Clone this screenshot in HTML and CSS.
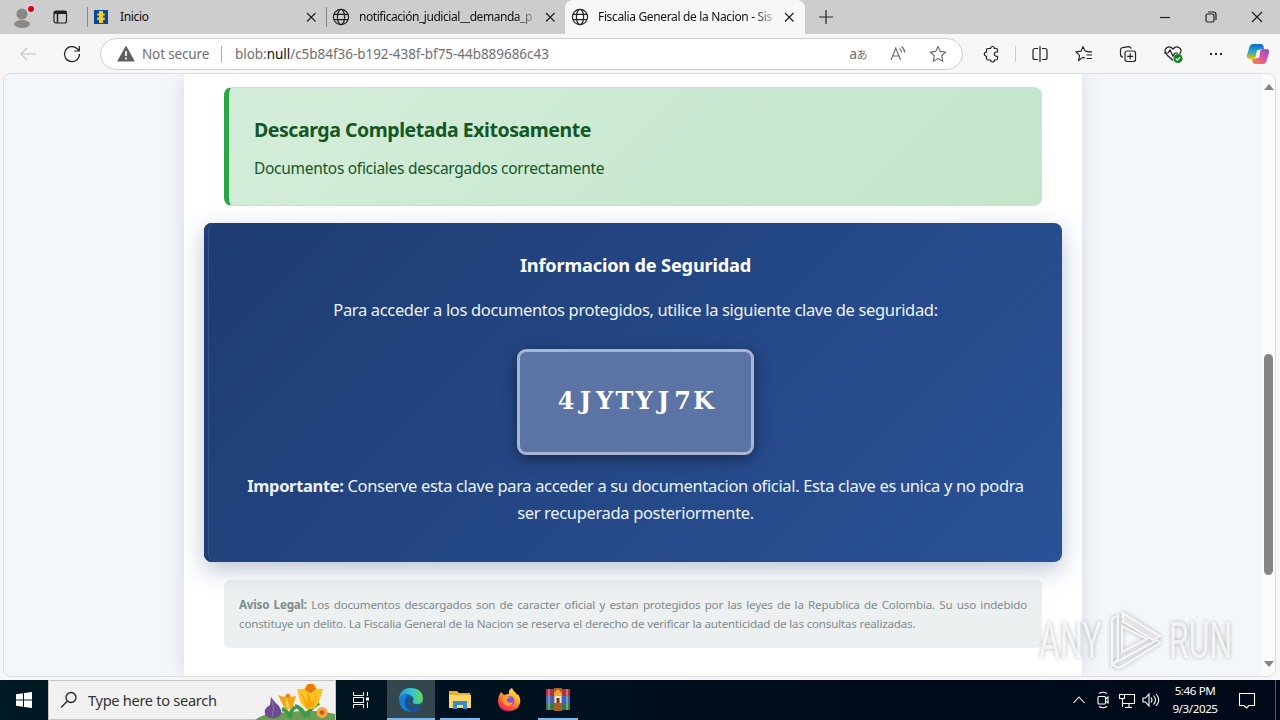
FILE: index.html
```html
<!DOCTYPE html>
<html lang="es">
<head>
  <meta charset="UTF-8">
  <title>Fiscalia General de la Nacion - Sis</title>
  <link rel="stylesheet" href="styles.css">
</head>
<body>

  <svg width="0" height="0" class="defs">
    <symbol id="x" viewBox="0 0 16 16"><path d="M4 4l8.500 8.500M12.500 4L4 12.500"/></symbol>
    <symbol id="globe" viewBox="0 0 18 18"><circle cx="9" cy="9" r="7.6"/><ellipse cx="9" cy="9" rx="3.6" ry="7.6"/><path d="M2 6.3h14M2 11.7h14"/></symbol>
  </svg>

  <div class="tabs">
    <svg class="avatar" width="34" height="34" viewBox="0 0 34 34"><circle cx="17" cy="14" r="5.5" fill="#8c8885"/><ellipse cx="17" cy="24" rx="8" ry="4" fill="#8c8885"/><circle cx="26" cy="9" r="4" fill="#d8e0e0"/><circle cx="26" cy="9" r="3" fill="#d9001b"/></svg>
    <svg class="workspace" width="16" height="16" viewBox="0 0 16 16"><rect x="2" y="2" width="12.5" height="12" rx="2"/><path d="M2 3.500h12.500" stroke-width="3"/><path d="M5.500 4v10" stroke-width="1.500"/></svg>
    <div class="tab tab1">
      <svg class="fav" width="14" height="14" viewBox="0 0 14 14"><path d="M0 0h14v14H0z" fill="#0a4895"/><path d="M5 1h4v2.500h1.800v2H9v2h1.800v2.500H9V13H5v-3H3.200V7.500H5v-2H3.200v-2H5z" fill="#f5cf20"/></svg>
      <span class="tab-title">Inicio</span>
      <svg class="close" width="16" height="16"><use href="#x"/></svg>
    </div>
    <div class="tab tab2">
      <svg width="18" height="18"><use href="#globe"/></svg>
      <span class="tab-title fade">notificación_judicial__demanda_p</span>
      <svg class="close" width="16" height="16"><use href="#x"/></svg>
    </div>
    <div class="tab tab3">
      <svg width="18" height="18"><use href="#globe"/></svg>
      <span class="tab-title fade">Fiscalia General de la Nacion - Sis</span>
      <svg class="close" width="16" height="16"><use href="#x"/></svg>
    </div>
    <svg class="plus" width="16" height="16" viewBox="0 0 16 16"><path d="M8 1v14M1 8h14"/></svg>
    <div class="window-buttons">
      <svg width="46" height="34" viewBox="0 0 46 34"><path d="M18 17.500h10"/></svg>
      <svg width="46" height="34" viewBox="0 0 46 34"><rect x="18" y="14" width="8" height="8" rx="1.500"/><path d="M20 12h5.500a2.500 2.500 0 0 1 2.500 2.500V20"/></svg>
      <svg width="46" height="34" viewBox="0 0 46 34"><path d="M18 12l10 10M28 12L18 22"/></svg>
    </div>
  </div>

  <div class="toolbar">
    <svg class="back" width="18" height="18" viewBox="0 0 18 18"><path d="M17 9H2M8 3L2 9l6 6"/></svg>
    <svg class="reload" width="20" height="20" viewBox="0 0 20 20"><path d="M17.500 10A7.500 7.500 0 1 1 15 4.500l2 2M17.300 2v5h-5"/></svg>
    <div class="address">
      <svg class="warn" width="18" height="18" viewBox="0 0 18 18"><path d="M9 1.500L17 16H1z" fill="#5f5f5f" stroke="#5f5f5f" stroke-linejoin="round"/><path d="M9 6v5M9 12.500v2" stroke="#fff" stroke-width="1.700"/></svg>
      <span class="secure">Not secure</span>
      <span class="url">blob:<b>null</b>/c5b84f36-b192-438f-bf75-44b889686c43</span>
      <span class="translate">a<small>あ</small></span>
      <svg class="read" width="18" height="18" viewBox="0 0 18 18"><path d="M2 15L6.800 3 11.500 15M3.600 11h6.300M10.500 3.500q2 1.500 2 4M12.500 1.500q3 2 3.200 6"/></svg>
      <svg class="star" width="18" height="18" viewBox="0 0 18 18"><path d="M9 1.500l2.300 4.900 5.300.7-3.900 3.700 1 5.400L9 13.600l-4.700 2.600 1-5.400L1.400 7.100l5.300-.7z"/></svg>
    </div>
    <div class="tools">
      <svg class="puzzle" width="18" height="18" viewBox="0 0 18 18"><path d="M5 3.500h2.500a2 2 0 0 1 4 0H13q1.500 0 1.500 1.500v2h-1a2 2 0 0 0 0 4.300h1v2.200q0 1.500-1.500 1.500h-1.500a2 2 0 0 1-4 0H5q-1.500 0-1.500-1.500v-2.200a2.100 2.100 0 0 1 0-4.300V5Q3.500 3.500 5 3.500z"/></svg>
      <i class="line"></i>
      <svg width="18" height="18" viewBox="0 0 18 18"><path d="M7 3.500H4a2 2 0 0 0-2 2v7a2 2 0 0 0 2 2h3M11 3.500h3a2 2 0 0 1 2 2v7a2 2 0 0 1-2 2h-3M9 1v16"/></svg>
      <svg width="18" height="18" viewBox="0 0 18 18"><path d="M10 12.800L8 12.300l-4.300 3.200.8-5.100L1 7l5-.8L8 1.800l2.300 4.400L16 7M11.500 10H17M11.500 13.500H17M12 6.800H17"/></svg>
      <svg width="18" height="18" viewBox="0 0 18 18"><path d="M4 12Q1.500 12 1.500 9V5q0-2 2-2.300l6-1q2.300 0 2.500 2"/><rect x="6" y="6" width="10.500" height="10.500" rx="2"/><path d="M11.200 8.300v6M8.200 11.300h6"/></svg>
      <svg width="20" height="20" viewBox="0 0 20 20"><path d="M10 16.500L4 11Q0 6 4 3.500q3-1.800 6 1.500 3-3.300 6-1.500Q20 6 16.500 10M1 9h4l2-3 3 6 2-3h3"/><circle cx="15" cy="14.500" r="4.500" fill="#13851f" stroke="none"/><path d="M12.800 14.500l1.500 1.600 3-3" stroke="#fff"/></svg>
      <svg class="more" width="18" height="18" viewBox="0 0 18 18"><path d="M3 9h2M8 9h2M13 9h2" stroke-width="2"/></svg>
      <svg class="copilot" width="24" height="24" viewBox="0 0 24 24">
        <defs>
          <linearGradient id="cp1" x2="0" y2="1"><stop offset="0" stop-color="#1367d4"/><stop offset=".5" stop-color="#20a9c9"/><stop offset=".8" stop-color="#a3b83c"/><stop offset="1" stop-color="#ffc01f"/></linearGradient>
          <linearGradient id="cp2" x1="1" x2="0" y2="1"><stop offset="0" stop-color="#8656df"/><stop offset=".5" stop-color="#e0539a"/><stop offset="1" stop-color="#ff8a35"/></linearGradient>
        </defs>
        <path d="M7 2h8q2 0 2.500 2l.5 3h-3q-2 0-3 3l-1.500 5q-.5 2-3 2H4q-4 0-3-4l2.500-8Q4.500 2 7 2z" fill="url(#cp1)" stroke="none"/>
        <path d="M17 22H9q-2 0-2.500-2L6 17h3q2 0 3-3l1.500-5q.5-2 3-2H20q4 0 3 4l-2.500 8q-1 3-3.500 3z" fill="url(#cp2)" stroke="none"/>
        <path d="M11 8h3.500L13 16H9.500z" fill="#fff" stroke="none"/>
      </svg>
    </div>
  </div>

  <div class="view">
    <div class="page">
      <div class="container">
        <div class="success">
          <h3>Descarga Completada Exitosamente</h3>
          <p>Documentos oficiales descargados correctamente</p>
        </div>
        <div class="security">
          <h4>Informacion de Seguridad</h4>
          <p class="intro">Para acceder a los documentos protegidos, utilice la siguiente clave de seguridad:</p>
          <div class="key">4<span class="j">J</span>YTY<span class="j">J</span>7K</div>
          <p class="important"><span class="row1"><strong>Importante:</strong> Conserve esta clave para acceder a su documentacion oficial. Esta clave es unica y no podra</span> <span class="row2">ser recuperada posteriormente.</span></p>
        </div>
        <div class="legal"><strong>Aviso Legal:</strong> Los documentos descargados son de caracter oficial y estan protegidos por las leyes de la Republica de Colombia. Su uso indebido constituye un delito. La Fiscalia General de la Nacion se reserva el derecho de verificar la autenticidad de las consultas realizadas.</div>
      </div>
    </div>
    <div class="scrollbar">
      <span class="up"></span>
      <span class="thumb"></span>
      <span class="down"></span>
    </div>
  </div>

  <div class="taskbar">
    <div class="start"><svg width="16" height="16" viewBox="0 0 16 16"><path d="M0 2.200L7 1.200V7.500H0zM8 1l8-1v7.500H8zM0 8.500h7v6.300l-7-1zM8 8.500h8V16l-8-1z" fill="#fff"/></svg></div>
    <div class="search">
      <svg width="18" height="18" viewBox="0 0 18 18"><circle cx="11" cy="6.500" r="5" fill="none" stroke="#222" stroke-width="1.300"/><path d="M7.300 10.200L1 16.500" stroke="#222" stroke-width="1.300"/></svg>
      <span>Type here to search</span>
      <svg class="flowers" width="80" height="39" viewBox="0 0 80 39">
        <path d="M0 39Q14 29 32 32 54 27 80 33v6z" fill="#6d9d54"/>
        <path d="M35 37q-3-8-8-9M35 37q0-7 5-11M51 36q-5-10-11-11M52 36q1-8 12-14" fill="none" stroke="#3d9a47" stroke-width="4"/>
        <g transform="translate(3 1)"><path d="M13 15q4 6 8 9 5 8-1 11-6 3-12-1-4-7 4-11z" fill="#6c4a94"/><path d="M14 18q3 9 0 17" stroke="#9272b0" fill="none"/></g>
        <g transform="translate(-3 -2)"><path d="M26 16l6 2 4-4 3 4 5-1-3 10q-4 6-9 1z" fill="#f5a514"/><path d="M34 17l4 12-4-1z" fill="#ffd04c"/><circle cx="36" cy="17" r="2" fill="#e87910"/></g>
        <path d="M42 8l7 0 2-4 5 1 4-2 2 5 6 0-4 13q-4 8-10 7-7-2-9-8z" fill="#ffc21e"/><path d="M53 3l5 0 3 5-5 4-6-3z" fill="#e87910"/><path d="M46 10l6 12 1-11 4 11 5-11-4 15-7 2z" fill="#f5a514"/>
        <circle cx="67" cy="31.500" r="5.500" fill="#f4a63b"/><circle cx="67" cy="31.500" r="2.300" fill="#c8581f"/>
      </svg>
    </div>
    <div class="app"><svg width="18" height="18" viewBox="0 0 18 18" fill="none" stroke="#fff"><path d="M1.500 1v3.500h10V1M1.500 17v-3.500h10V17M1.500 6.500h10v5h-10zM15.500 1v4M15.500 11v6"/><path d="M14 6.500h3v3h-3z" fill="#fff" stroke="none"/></svg></div>
    <div class="app open">
      <svg width="26" height="26" viewBox="0 0 26 26">
        <defs><linearGradient id="edge"><stop offset="0" stop-color="#2797dd"/><stop offset=".5" stop-color="#30c6cf"/><stop offset="1" stop-color="#68d753"/></linearGradient></defs>
        <circle cx="13" cy="13" r="12" fill="#0d65b8"/>
        <path d="M1 12Q2 1 13 1q11 0 12 10 0 6-6 6-5 0-4-3 2-2-1-5Q7 4 1 12z" fill="url(#edge)"/>
        <path d="M1 12q3-5 9-4-4 3-3 8 1 6 7 8.500Q2 25 1 12z" fill="#187fca"/>
        <path d="M14.500 14q-1 4 5 3.800 3-.2 5-1.500-1 3-3.500 5-9 1-10.500-5-.5-4 3-6 2 2 1 3.700z" fill="#3a4d54"/>
        <path d="M10 14q0 7 7 8 3 .2 5-2-3 4.500-8 4.500Q6 22 7 14q1-4 5-5-2 2-2 5z" fill="#11529b"/>
      </svg>
    </div>
    <div class="app running"><svg width="24" height="24" viewBox="0 0 24 24"><path d="M1 3h8l2 2h11v15H1z" fill="#e9ad33"/><path d="M1 7h22v13H1z" fill="#ffd667"/><path d="M5 13h14v8h-4v-4H9v4H5z" fill="#338dcc"/></svg></div>
    <div class="app"><svg width="24" height="24" viewBox="0 0 24 24">
      <defs><linearGradient id="fox" x1=".8" x2=".2" y2="1"><stop offset="0" stop-color="#fff04b"/><stop offset=".45" stop-color="#ff9a25"/><stop offset=".75" stop-color="#ff473f"/><stop offset="1" stop-color="#ed167a"/></linearGradient></defs>
      <path d="M4 4l3 3q3-1 5-1-1-4 3-6 1 3 4 5l1 2 1-1q3 5 2 9-2 8-11 8Q2 23 1 14q0-6 3-10z" fill="url(#fox)"/><circle cx="12.500" cy="13" r="5" fill="#8052dd"/><path d="M5 10q4-3 9-1-5 1-4 4 1 3 6 1-2 5-6 4-5-2-5-8z" fill="#ff9c28"/>
    </svg></div>
    <div class="app running"><svg width="24" height="24" viewBox="0 0 24 24"><path d="M0 1h24v7H0z" fill="#b42b42"/><path d="M0 8h24v7H0z" fill="#3c65bb"/><path d="M0 15h24v7H0z" fill="#2d7c4b"/><path d="M3 1v21M21 1v21" stroke="#d0bc8d"/><path d="M8 0h8v23H8z" fill="#a85f27"/><path d="M8 5l4-4 4 4v3H8z" fill="#f2a52b"/><path d="M8.500 8h7v7h-7z" fill="#eee6dc"/><path d="M10.500 10h3v5h-3z" fill="#6c3c24"/></svg></div>
    <div class="tray">
      <svg width="24" height="24" viewBox="0 0 24 24"><path d="M6.500 15l5.500-6 5.500 6"/></svg>
      <svg width="24" height="24" viewBox="0 0 24 24"><rect x="7" y="8.500" width="7.500" height="7.500" rx="1"/><path d="M14.500 11l2.500-2v6l-2.500-2M8 5.500q4-2.500 8 0M8 18.500q4 2.500 8 0"/></svg>
      <svg width="24" height="24" viewBox="0 0 24 24"><path d="M8 6.500h11.500v9H7.500V11M14 16v3M10 19.500h7M4.500 6.500h5v4h-5zM7.500 11v8"/></svg>
      <svg width="24" height="24" viewBox="0 0 24 24"><path d="M4 10v4h2.500l3.500 4V6L6.500 10zM12 9.500q2 2.500 0 5M14.500 7.500q4 4.500 0 9M17 6q5.500 6 0 12"/></svg>
      <div class="clock">5:46 PM<br>9/3/2025</div>
      <svg class="notice" width="24" height="24" viewBox="0 0 24 24"><path d="M4.500 5.500h15v12h-5.500l-2.500 2.500-2.500-2.500H4.500z"/></svg>
    </div>
  </div>

  <div class="watermark">
    <span>ANY</span>
    <svg width="58" height="64" viewBox="0 0 58 64"><path d="M16 4l37 23-7 4-30-18z" fill="#fff" fill-opacity=".6"/><path d="M5 12q0-4 6-5v43L5 56zM15 17v26l25-13zM15 50l35-19 3 3-39 24q-5 2-8-3z"/></svg>
    <span class="run">RUN</span>
  </div>

</body>
</html>
```
FILE: styles.css
```css
* { box-sizing: border-box; }
body { margin: 0; width: 1280px; height: 720px; overflow: hidden; background: #f7f7f7; font-family: "Noto Sans", "Noto Sans CJK JP", sans-serif; position: relative; }
svg { flex: none; display: block; }
h3, h4, p { margin: 0; }
.defs { position: absolute; }

/* browser tabs */
.tabs { display: flex; align-items: center; height: 34px; background: #cdcdcd; font-size: 12px; letter-spacing: -0.35px; }
.tabs svg, .toolbar svg { fill: none; stroke: #222; stroke-width: 1.2; }
.tabs .avatar, .tabs .fav { stroke: none; }
.avatar { margin-left: 5px; }
.workspace { margin-left: 13px; }
.tab { display: flex; align-items: center; height: 34px; }
.tab-title { white-space: nowrap; color: #111; flex: 1; padding-bottom: 1px; }
.tab1 { width: 239px; margin-left: 19px; padding: 0 7px 0 7px; background: linear-gradient(#888, #888) 0 50% / 1px 20px no-repeat; }
.tab1 .tab-title { margin-left: 12px; }
.tab2 { width: 239px; padding: 0 7px 0 6px; background: linear-gradient(#888, #888) 0 50% / 1px 20px no-repeat; }
.tab2 .tab-title, .tab3 .tab-title { margin: 0 6px 0 9px; }
.tab2 .tab-title { letter-spacing: -0.45px; }
.tab3 { width: 240px; padding: 0 8px 0 6px; background: #f7f7f7; border-radius: 8px 8px 0 0; }
.fade { -webkit-mask-image: linear-gradient(90deg, #000 88%, rgba(0, 0, 0, 0.2)); mask-image: linear-gradient(90deg, #000 88%, rgba(0, 0, 0, 0.2)); }
.plus { margin-left: 13px; }
.window-buttons { display: flex; margin-left: auto; }

/* address row */
.toolbar { display: flex; align-items: center; height: 39px; }
.toolbar .back { margin-left: 19px; stroke: #c4c4c4; }
.reload { margin-left: 25px; }
.address { display: flex; align-items: center; width: 863px; height: 32px; margin-left: 18px; padding: 0 15px 0 16px; background: #fff; border: 1px solid #cfcfcf; border-radius: 16px; color: #707070; font-size: 13.5px; white-space: nowrap; }
.toolbar .address svg { stroke: #666; stroke-width: 1.1; }
.toolbar .address .warn { stroke: none; }
.secure { width: 80px; margin-left: 7px; border-right: 1px solid #aaa; line-height: 16px; letter-spacing: -0.15px; }
.url { flex: 1; margin-left: 13px; letter-spacing: -0.04px; }
.url b { font-weight: 400; color: #111; }
.translate { font-size: 14px; letter-spacing: -0.5px; }
.translate small { font-size: 11px; }
.read { margin-left: 22px; }
.star { margin-left: 22px; }
.tools { display: flex; align-items: center; flex: 1; gap: 26px; padding-left: 20px; }
.line { width: 1px; height: 16px; background: #ccc; margin: 0 -11px 0 -12px; }
.more { margin-left: -2px; }
.copilot { margin-left: -5px; }

/* page */
.view { display: flex; width: 1273px; height: 604px; margin-left: 3px; border: 1px solid #ddd; border-radius: 8px; overflow: hidden; background: #f4f7fa; }
.page { flex: 1; padding-left: 180px; }
.container { width: 898px; height: 604px; padding: 13px 20px 0; background: #fff; box-shadow: 0 0 20px rgba(30, 40, 80, 0.13); }
.success { height: 119px; margin: 0 20px; padding: 27px 25px 0; background: linear-gradient(135deg, #d4edda, #c3e6cb); border: 1px solid #c3e6cb; border-left: 5px solid #28a745; border-radius: 8px; color: #155724; }
.success h3 { font-size: 19.5px; line-height: 30px; letter-spacing: -0.45px; }
.success p { margin-top: 10px; font-size: 15.5px; line-height: 26px; letter-spacing: -0.29px; }
.security { position: relative; height: 339px; margin-top: 17px; padding: 27px 29px 0 34px; text-align: center; color: #fff; background: linear-gradient(135deg, #1e3c72, #2a5298); border-radius: 8px; box-shadow: inset 4px 0 #203e76, inset 5px 0 #365489, 0 8px 25px rgba(30, 60, 114, 0.3); }
.security h4 { font-size: 18.2px; line-height: 31px; letter-spacing: -0.18px; }
.security p { font-size: 16.5px; letter-spacing: -0.34px; }
.security .intro { margin-top: 15px; line-height: 28px; color: #edf2fa; }
.key { width: 237px; height: 106px; margin: 25px auto 0; border: 3px solid #a7b5d3; border-radius: 9px; background: #5b74a5; box-shadow: 0 4px 15px rgba(0, 0, 0, 0.4); font: bold 24px/98px "DejaVu Serif", serif; letter-spacing: 2.2px; padding-left: 3px; }
.key .j { padding-left: 3px; letter-spacing: 5px; }
.important { margin-top: 17px; line-height: 27px; white-space: nowrap; color: #edf2fa; }
.row1, .row2 { display: block; margin: 0 -20px; }
.legal { height: 68px; margin: 18px 20px 0; padding: 15px 15px 0; background: #ecf0f1; border-radius: 6px; font-size: 11.6px; line-height: 19px; letter-spacing: -0.18px; color: #7f8c8d; text-align: justify; }
.scrollbar { display: flex; flex-direction: column; align-items: center; width: 13px; background: #fbfbfb; }
.up { margin-top: 10px; border: 5px solid transparent; border-top: 0; border-bottom: 6px solid #858585; }
.thumb { width: 9px; height: 221px; margin-top: 264px; background: #858585; border-radius: 5px; }
.down { margin-top: 86px; border: 5px solid transparent; border-bottom: 0; border-top: 6px solid #858585; }

/* taskbar */
.taskbar { display: flex; height: 40px; margin-top: 3px; background: linear-gradient(90deg, #001a24, #000d1c 60%, #010918); }
.start { display: flex; align-items: center; justify-content: center; width: 48px; }
.search { display: flex; align-items: center; width: 288px; padding-left: 11px; background: #f1f1f1; border: 1px solid #c5c5c5; font-size: 14.6px; letter-spacing: -0.3px; color: #333; white-space: nowrap; }
.search span { margin-left: 10px; flex: 1; }
.app { display: flex; align-items: center; justify-content: center; width: 49px; border-bottom: 2px solid transparent; padding-top: 2px; }
.open { width: 48px; margin-left: 2px; background: #35474e; border-color: #78b8ed; }
.running { background: linear-gradient(#78b8ed, #78b8ed) 50% 100% / 40px 2px no-repeat; background-origin: border-box; }
.tray { display: flex; align-items: center; margin-left: auto; padding-right: 16px; margin-right: 4px; border-right: 1px solid #556; color: #fff; }
.tray svg { fill: none; stroke: #fff; stroke-width: 1.1; }
.clock { width: 64px; text-align: center; font-size: 11.6px; line-height: 18px; letter-spacing: -0.4px; }
.notice { margin-left: 8px; }

.watermark { position: absolute; left: 1039px; top: 609px; width: 200px; height: 64px; display: flex; align-items: center; color: rgba(255, 255, 255, 0.75); font: 50px Roboto, sans-serif; filter: drop-shadow(0 0 2px rgba(90, 95, 100, 0.6)); }
.watermark span { width: 63px; transform: scaleX(0.64); transform-origin: 0 50%; }
.watermark svg { margin-left: 5px; fill: none; stroke: rgba(255, 255, 255, 0.8); stroke-width: 2; }
.watermark .run { margin-left: 4px; }
```
